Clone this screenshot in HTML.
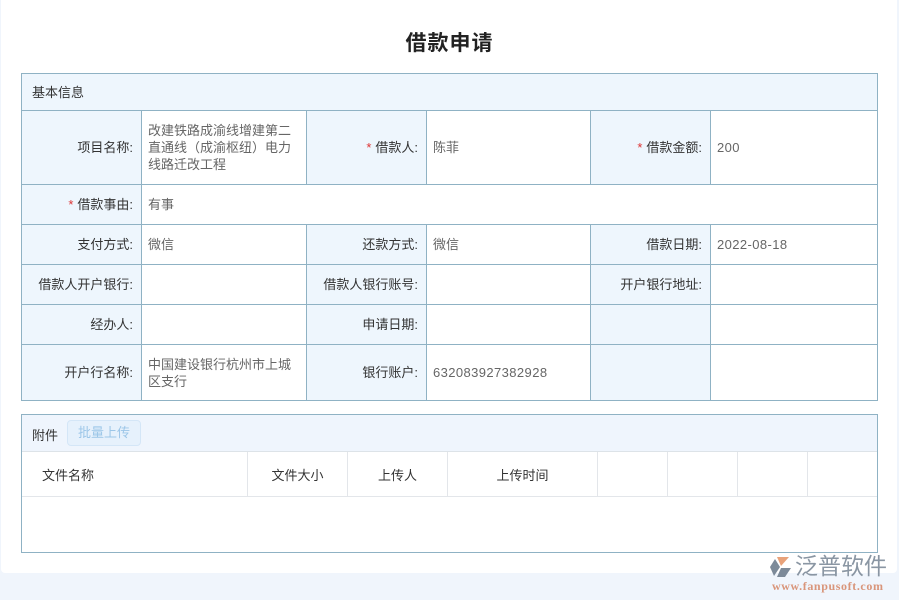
<!DOCTYPE html>
<html><head><meta charset="utf-8"><style>
*{margin:0;padding:0;box-sizing:border-box}
body{width:899px;height:600px;background:#f0f5fc;font-family:"Liberation Sans","Noto Sans CJK SC",sans-serif;font-size:13px;color:#333;position:relative;overflow:hidden}
.card{position:absolute;left:1px;top:0;width:896px;height:573px;background:#fff;border-radius:0 0 4px 4px}
.title{position:absolute;left:0;width:899px;top:27px;text-align:center;font-size:21px;font-weight:bold;color:#222;letter-spacing:1px}
.c{position:absolute;border:1px solid #8fb2c4;display:flex;align-items:center;line-height:17px}
.l{background:#eef6fd;justify-content:flex-end;padding-right:8px;color:#333}
.v{background:#fff;padding-left:6px;padding-right:8px;color:#666}
.n{letter-spacing:.4px}
.s{color:#d33;margin-right:4px}
.t2{position:absolute;left:21px;top:414px;width:857px;height:139px;border:1px solid #8fb2c4;background:#fff}
.h2{position:absolute;left:0;top:0;width:855px;height:37px;background:#eff5fd;border-bottom:1px solid #dde3e8}
.btn{position:absolute;left:45px;top:5px;width:74px;height:26px;border:1px solid #d4e6f7;border-radius:4px;background:#e6f1fc;color:#9cc6e8;text-align:center;line-height:24px}
.th{position:absolute;top:37px;height:45px;border-right:1px solid #e3e6ea;border-bottom:1px solid #e3e6ea;display:flex;align-items:center;justify-content:center;color:#333}
</style></head><body>
<div class="card"></div>
<div class="title">借款申请</div>

<div class="c" style="left:21px;top:73px;width:857px;height:38px;background:#eef6fd;padding-left:10px">基本信息</div>

<div class="c l" style="left:21px;top:110px;width:121px;height:75px">项目名称:</div>
<div class="c v" style="left:141px;top:110px;width:166px;height:75px">改建铁路成渝线增建第二直通线（成渝枢纽）电力线路迁改工程</div>
<div class="c l" style="left:306px;top:110px;width:121px;height:75px"><span class="s">*</span>借款人:</div>
<div class="c v" style="left:426px;top:110px;width:165px;height:75px">陈菲</div>
<div class="c l" style="left:590px;top:110px;width:121px;height:75px"><span class="s">*</span>借款金额:</div>
<div class="c v n" style="left:710px;top:110px;width:168px;height:75px">200</div>

<div class="c l" style="left:21px;top:184px;width:121px;height:41px"><span class="s">*</span>借款事由:</div>
<div class="c v" style="left:141px;top:184px;width:737px;height:41px">有事</div>

<div class="c l" style="left:21px;top:224px;width:121px;height:41px">支付方式:</div>
<div class="c v" style="left:141px;top:224px;width:166px;height:41px">微信</div>
<div class="c l" style="left:306px;top:224px;width:121px;height:41px">还款方式:</div>
<div class="c v" style="left:426px;top:224px;width:165px;height:41px">微信</div>
<div class="c l" style="left:590px;top:224px;width:121px;height:41px">借款日期:</div>
<div class="c v n" style="left:710px;top:224px;width:168px;height:41px">2022-08-18</div>

<div class="c l" style="left:21px;top:264px;width:121px;height:41px">借款人开户银行:</div>
<div class="c v" style="left:141px;top:264px;width:166px;height:41px"></div>
<div class="c l" style="left:306px;top:264px;width:121px;height:41px">借款人银行账号:</div>
<div class="c v" style="left:426px;top:264px;width:165px;height:41px"></div>
<div class="c l" style="left:590px;top:264px;width:121px;height:41px">开户银行地址:</div>
<div class="c v" style="left:710px;top:264px;width:168px;height:41px"></div>

<div class="c l" style="left:21px;top:304px;width:121px;height:41px">经办人:</div>
<div class="c v" style="left:141px;top:304px;width:166px;height:41px"></div>
<div class="c l" style="left:306px;top:304px;width:121px;height:41px">申请日期:</div>
<div class="c v" style="left:426px;top:304px;width:165px;height:41px"></div>
<div class="c l" style="left:590px;top:304px;width:121px;height:41px"></div>
<div class="c v" style="left:710px;top:304px;width:168px;height:41px"></div>

<div class="c l" style="left:21px;top:344px;width:121px;height:57px">开户行名称:</div>
<div class="c v" style="left:141px;top:344px;width:166px;height:57px">中国建设银行杭州市上城区支行</div>
<div class="c l" style="left:306px;top:344px;width:121px;height:57px">银行账户:</div>
<div class="c v n" style="left:426px;top:344px;width:165px;height:57px">632083927382928</div>
<div class="c l" style="left:590px;top:344px;width:121px;height:57px"></div>
<div class="c v" style="left:710px;top:344px;width:168px;height:57px"></div>

<div class="t2">
 <div class="h2"><span style="position:absolute;left:10px;top:10px">附件</span><div class="btn">批量上传</div></div>
 <div class="th" style="left:0;width:226px;justify-content:flex-start;padding-left:20px">文件名称</div>
 <div class="th" style="left:226px;width:100px">文件大小</div>
 <div class="th" style="left:326px;width:100px">上传人</div>
 <div class="th" style="left:426px;width:150px">上传时间</div>
 <div class="th" style="left:576px;width:70px"></div>
 <div class="th" style="left:646px;width:70px"></div>
 <div class="th" style="left:716px;width:70px"></div>
 <div class="th" style="left:786px;width:69px;border-right:none"></div>
</div>

<div style="position:absolute;left:769px;top:556px;width:24px;height:22px">
<svg width="24" height="22" viewBox="0 0 24 22"><path d="M8 1 L20 1 L12 10 Z" fill="#e8a27a"/><path d="M6 3 L11 11 L5 20 L1 11 Z" fill="#7d8a99"/><path d="M12 12 L22 12 L16 21 L8 21 Z" fill="#7d8a99"/></svg>
</div>
<div style="position:absolute;left:795px;top:553px;font-size:23px;color:#8a96a3;letter-spacing:0px;line-height:26px">泛普软件</div>
<div style="position:absolute;left:772px;top:579px;font-family:'Liberation Serif',serif;font-size:12px;color:#d9957a;font-weight:bold;letter-spacing:.6px">www.fanpusoft.com</div>
</body></html>
